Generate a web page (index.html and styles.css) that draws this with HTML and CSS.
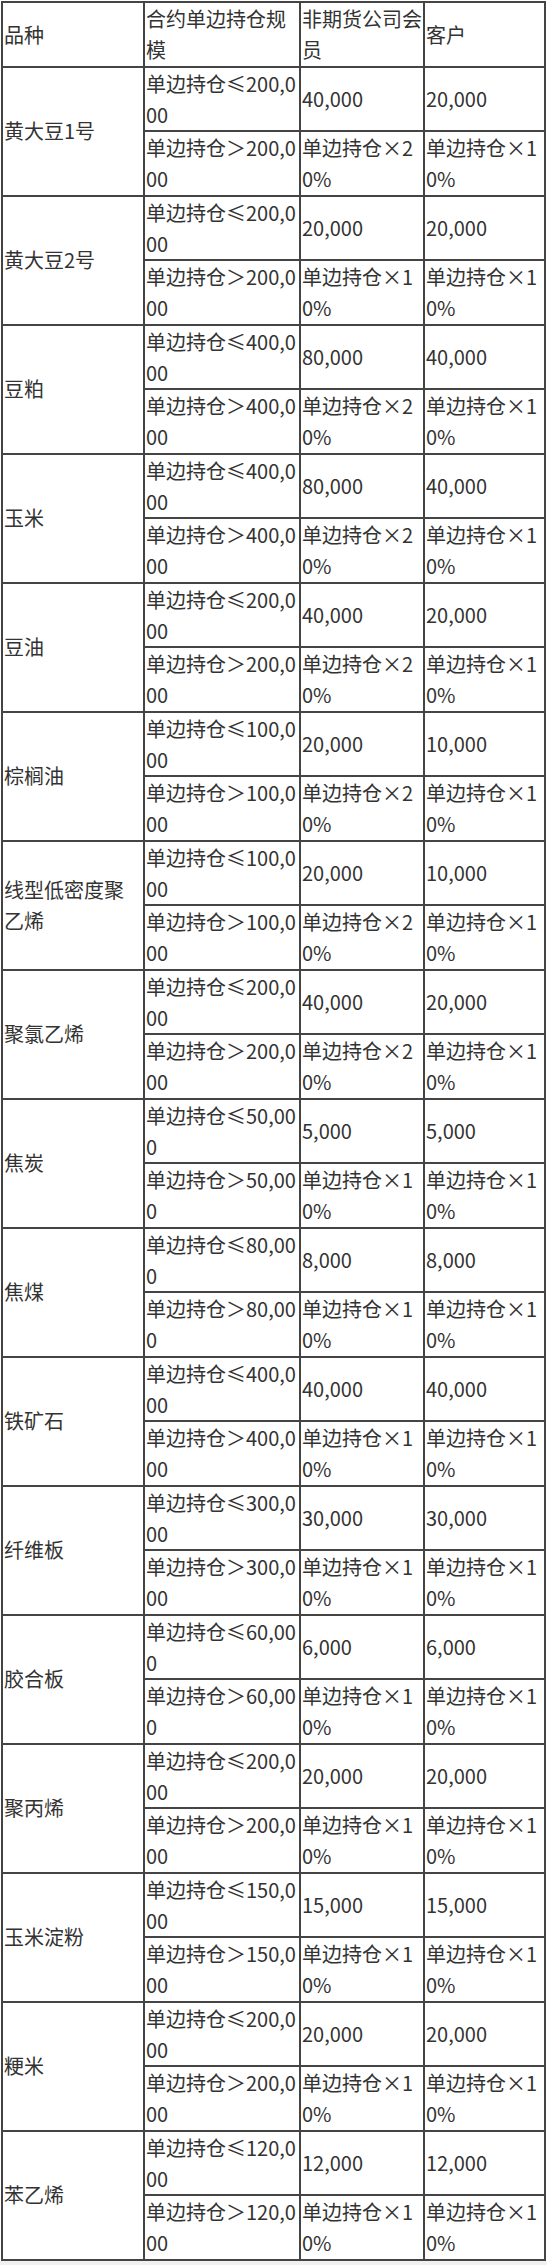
FILE: index.html
```html
<!DOCTYPE html>
<html lang="zh-CN">
<head>
<meta charset="utf-8">
<title>持仓限额</title>
<link rel="stylesheet" href="styles.css">
</head>
<body>
<div class="page">
<table class="limits">
<thead>
<tr><th class="c-name">品种</th><th class="c-scale">合约单边持仓规模</th><th class="c-member">非期货公司会员</th><th class="c-client">客户</th></tr>
</thead>
<tbody>
<tr><td rowspan="2">黄大豆1号</td><td>单边持仓≤200,000</td><td>40,000</td><td>20,000</td></tr>
<tr><td>单边持仓＞200,000</td><td>单边持仓×20%</td><td>单边持仓×10%</td></tr>
<tr><td rowspan="2">黄大豆2号</td><td>单边持仓≤200,000</td><td>20,000</td><td>20,000</td></tr>
<tr><td>单边持仓＞200,000</td><td>单边持仓×10%</td><td>单边持仓×10%</td></tr>
<tr><td rowspan="2">豆粕</td><td>单边持仓≤400,000</td><td>80,000</td><td>40,000</td></tr>
<tr><td>单边持仓＞400,000</td><td>单边持仓×20%</td><td>单边持仓×10%</td></tr>
<tr><td rowspan="2">玉米</td><td>单边持仓≤400,000</td><td>80,000</td><td>40,000</td></tr>
<tr><td>单边持仓＞400,000</td><td>单边持仓×20%</td><td>单边持仓×10%</td></tr>
<tr><td rowspan="2">豆油</td><td>单边持仓≤200,000</td><td>40,000</td><td>20,000</td></tr>
<tr><td>单边持仓＞200,000</td><td>单边持仓×20%</td><td>单边持仓×10%</td></tr>
<tr><td rowspan="2">棕榈油</td><td>单边持仓≤100,000</td><td>20,000</td><td>10,000</td></tr>
<tr><td>单边持仓＞100,000</td><td>单边持仓×20%</td><td>单边持仓×10%</td></tr>
<tr><td rowspan="2">线型低密度聚乙烯</td><td>单边持仓≤100,000</td><td>20,000</td><td>10,000</td></tr>
<tr><td>单边持仓＞100,000</td><td>单边持仓×20%</td><td>单边持仓×10%</td></tr>
<tr><td rowspan="2">聚氯乙烯</td><td>单边持仓≤200,000</td><td>40,000</td><td>20,000</td></tr>
<tr><td>单边持仓＞200,000</td><td>单边持仓×20%</td><td>单边持仓×10%</td></tr>
<tr><td rowspan="2">焦炭</td><td>单边持仓≤50,000</td><td>5,000</td><td>5,000</td></tr>
<tr><td>单边持仓＞50,000</td><td>单边持仓×10%</td><td>单边持仓×10%</td></tr>
<tr><td rowspan="2">焦煤</td><td>单边持仓≤80,000</td><td>8,000</td><td>8,000</td></tr>
<tr><td>单边持仓＞80,000</td><td>单边持仓×10%</td><td>单边持仓×10%</td></tr>
<tr><td rowspan="2">铁矿石</td><td>单边持仓≤400,000</td><td>40,000</td><td>40,000</td></tr>
<tr><td>单边持仓＞400,000</td><td>单边持仓×10%</td><td>单边持仓×10%</td></tr>
<tr><td rowspan="2">纤维板</td><td>单边持仓≤300,000</td><td>30,000</td><td>30,000</td></tr>
<tr><td>单边持仓＞300,000</td><td>单边持仓×10%</td><td>单边持仓×10%</td></tr>
<tr><td rowspan="2">胶合板</td><td>单边持仓≤60,000</td><td>6,000</td><td>6,000</td></tr>
<tr><td>单边持仓＞60,000</td><td>单边持仓×10%</td><td>单边持仓×10%</td></tr>
<tr><td rowspan="2">聚丙烯</td><td>单边持仓≤200,000</td><td>20,000</td><td>20,000</td></tr>
<tr><td>单边持仓＞200,000</td><td>单边持仓×10%</td><td>单边持仓×10%</td></tr>
<tr><td rowspan="2">玉米淀粉</td><td>单边持仓≤150,000</td><td>15,000</td><td>15,000</td></tr>
<tr><td>单边持仓＞150,000</td><td>单边持仓×10%</td><td>单边持仓×10%</td></tr>
<tr><td rowspan="2">粳米</td><td>单边持仓≤200,000</td><td>20,000</td><td>20,000</td></tr>
<tr><td>单边持仓＞200,000</td><td>单边持仓×10%</td><td>单边持仓×10%</td></tr>
<tr><td rowspan="2">苯乙烯</td><td>单边持仓≤120,000</td><td>12,000</td><td>12,000</td></tr>
<tr><td>单边持仓＞120,000</td><td>单边持仓×10%</td><td>单边持仓×10%</td></tr>
</tbody>
</table>
</div>
</body>
</html>
```

FILE: styles.css
```css
html, body {
  margin: 0;
  padding: 0;
}

body {
  background: #f1f1f1;
  color: #333;
  font-family: "Noto Sans CJK SC", "Open Sans", sans-serif;
  font-size: 20px;
}

.page {
  width: 545px;
  padding: 1px 1px 0 1px;
  background: #fff;
}

.limits {
  width: 545px;
  table-layout: fixed;
  border-collapse: separate;
  border-spacing: 0;
  border: 1px solid #444;
}

.limits th,
.limits td {
  border: 1px solid #444;
  padding: 0 0 0 1px;
  line-height: 31.25px;
  font-weight: normal;
  text-align: left;
  vertical-align: middle;
  word-break: break-all;
}

.c-name { width: 139px; }
.c-scale { width: 153px; }
.c-member { width: 121px; }
.c-client { width: 118px; }
```
